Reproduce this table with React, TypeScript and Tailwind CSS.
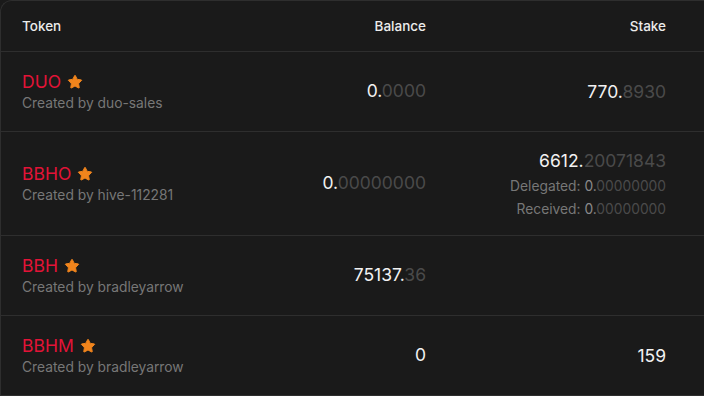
import { Star } from "lucide-react";

type Row = {
  symbol: string;
  issuer: string;
  balance: [string, string];
  stake?: [string, string];
  delegated?: [string, string];
  received?: [string, string];
  height: string;
};

const rows: Row[] = [
  { symbol: "DUO", issuer: "duo-sales", balance: ["0.", "0000"], stake: ["770.", "8930"], height: "h-[80px]" },
  {
    symbol: "BBHO",
    issuer: "hive-112281",
    balance: ["0.", "00000000"],
    stake: ["6612.", "20071843"],
    delegated: ["0.", "00000000"],
    received: ["0.", "00000000"],
    height: "h-[104px]",
  },
  { symbol: "BBH", issuer: "bradleyarrow", balance: ["75137.", "36"], height: "h-[80px]" },
  { symbol: "BBHM", issuer: "bradleyarrow", balance: ["0", ""], stake: ["159", ""], height: "h-[80px]" },
];

function Amount({ value }: { value: [string, string] }) {
  return (
    <span>
      <span className="text-[#f2f2f2]">{value[0]}</span>
      <span className="text-[#4a4a4a]">{value[1]}</span>
    </span>
  );
}

export default function App() {
  return (
    <div
      className="h-screen w-screen overflow-hidden bg-[#1a1a1a]"
      style={{ fontFamily: "Inter, 'Noto Sans', sans-serif" }}
    >
      <div className="w-[740px] rounded-tl-xl border-l border-t border-[#2e2e2e] bg-[#1a1a1a]">
        {/* header */}
        <div className="flex h-[51px] items-center border-b border-[#2e2e2e] pl-[21px] text-[13.5px] font-medium text-[#ececec]">
          <div className="flex-1">Token</div>
          <div className="w-[160px] text-right">Balance</div>
          <div className="w-[240px] text-right">Stake</div>
          <div className="w-[74px]" />
        </div>

        {rows.map((r) => (
          <div key={r.symbol} className={`flex ${r.height} items-center border-b border-[#2e2e2e] pl-[21px]`}>
            <div className="flex-1">
              <div className="flex items-center gap-[6px] text-[17.5px] leading-[22px] text-[#e31337]">
                {r.symbol}
                <Star className="h-[16px] w-[16px] text-[#f0841c]" fill="currentColor" strokeWidth={1.5} />
              </div>
              <div className="text-[13.8px] leading-[20px] text-[#777777]">Created by {r.issuer}</div>
            </div>
            <div className="w-[160px] text-right text-[17.5px]">
              <Amount value={r.balance} />
            </div>
            <div className="w-[240px] text-right">
              {r.stake && (
                <div className={`text-[17.5px] ${r.delegated ? "leading-[27px]" : "leading-[24px]"}`}>
                  <Amount value={r.stake} />
                </div>
              )}
              {r.delegated && (
                <div className="text-[13.8px] leading-[24px] text-[#777777]">
                  Delegated: <span className="text-[#8a8a8a]">{r.delegated[0]}</span>
                  <span className="text-[#4a4a4a]">{r.delegated[1]}</span>
                </div>
              )}
              {r.received && (
                <div className="text-[13.8px] leading-[22px] text-[#777777]">
                  Received: <span className="text-[#8a8a8a]">{r.received[0]}</span>
                  <span className="text-[#4a4a4a]">{r.received[1]}</span>
                </div>
              )}
            </div>
            <div className="w-[74px]" />
          </div>
        ))}
      </div>
    </div>
  );
}
